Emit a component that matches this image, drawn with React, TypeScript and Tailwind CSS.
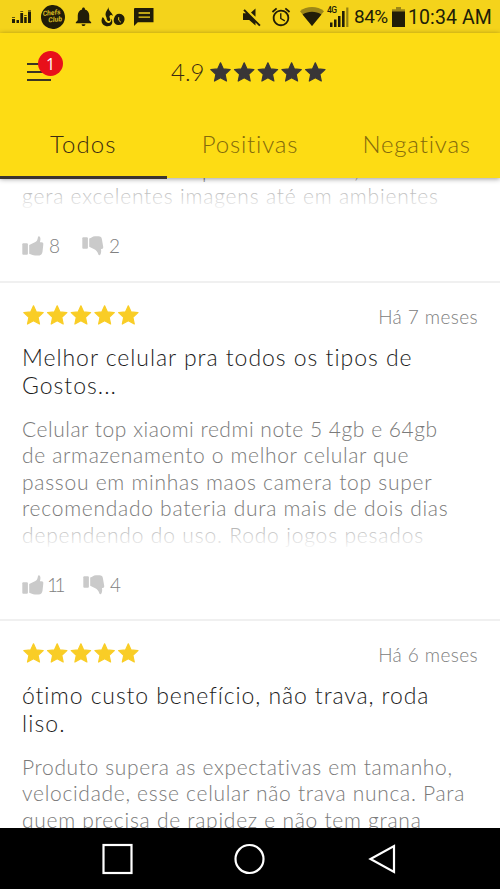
import type { ReactNode } from 'react';
import { clsx } from 'clsx';
import { MdAlarm, MdNotifications } from 'react-icons/md';

interface Line {
  text: string;
  tracking: string;
}

interface Review {
  date: string;
  title: Line[];
  body: Line[];
  likes?: number;
  dislikes?: number;
}

const reviews: Review[] = [
  {
    date: 'Há 7 meses',
    title: [
      { text: 'Melhor celular pra todos os tipos de', tracking: 'tracking-[0.97px]' },
      { text: 'Gostos...', tracking: 'tracking-[1px]' },
    ],
    body: [
      { text: 'Celular top xiaomi redmi note 5 4gb e 64gb', tracking: 'tracking-[0.53px]' },
      { text: 'de armazenamento o melhor celular que', tracking: 'tracking-[0.66px]' },
      { text: 'passou em minhas maos camera top super', tracking: 'tracking-[0.73px]' },
      { text: 'recomendado bateria dura mais de dois dias', tracking: 'tracking-[0.73px]' },
      { text: 'dependendo do uso. Rodo jogos pesados', tracking: 'tracking-[0.83px]' },
    ],
    likes: 11,
    dislikes: 4,
  },
  {
    date: 'Há 6 meses',
    title: [
      { text: 'ótimo custo benefício, não trava, roda', tracking: 'tracking-[0.9px]' },
      { text: 'liso.', tracking: 'tracking-[1.1px]' },
    ],
    body: [
      { text: 'Produto supera as expectativas em tamanho,', tracking: 'tracking-[0.64px]' },
      { text: 'velocidade, esse celular não trava nunca. Para', tracking: 'tracking-[0.7px]' },
      { text: 'quem precisa de rapidez e não tem grana', tracking: 'tracking-[0.73px]' },
    ],
  },
];

function Stars({ className }: { className: string }) {
  return (
    <svg viewBox="0 0 118 22" className={clsx('h-[22px] w-[118px] shrink-0', className)}>
      {[0, 1, 2, 3, 4].map((i) => (
        <path
          key={i}
          transform={`translate(${i * 23.7} 0)`}
          d="M11.5 1.8 L14.3 7.9 L21.2 8.6 L16.1 13.3 L17.5 20 L11.5 16.7 L5.5 20 L6.9 13.3 L1.8 8.6 L8.7 7.9 Z"
          fill="currentColor"
          stroke="currentColor"
          strokeWidth="1.2"
          strokeLinejoin="round"
        />
      ))}
    </svg>
  );
}

function Thumb({ down }: { down?: boolean }) {
  return (
    <svg viewBox="0 0 22 20" className="h-5 w-[22px] shrink-0 text-[#cacaca]" fill="currentColor">
      {down ? (
        <>
          <rect x="0.3" y="1.3" width="5.6" height="11.4" rx="1" />
          <path d="M7.2 2.4 C9.5 2.2 10.3 .3 13 .3 H16.5 C18.6 .3 19.6 1.2 19.9 3.2 L21.2 10.8 C21.4 12.3 20.7 13.1 19.3 13 H19 C19.3 14.8 19.3 16.8 18.4 18.6 C17.8 19.8 16.6 19.5 16.3 18.3 C15.6 15.6 14.1 14.2 12.3 13.2 L7.2 10.8 Z" />
        </>
      ) : (
        <>
          <rect x="0.3" y="7.3" width="5.6" height="11.4" rx="1" />
          <path d="M7.2 9 L12.9 6.2 C14.9 5.2 15.6 3.8 15.9 1.4 C16.1 .1 17.5 0 18.1 1.3 C18.8 2.9 18.3 4.6 17.9 6.2 H19.4 C20.9 6.2 21.5 7.1 21.3 8.5 L20.5 15.8 C20.2 18.1 18.9 19.5 16.6 19.5 H13 C10.4 19.5 9.2 18 7.2 17.7 Z" />
        </>
      )}
    </svg>
  );
}

function Votes({ likes, dislikes }: { likes: number; dislikes: number }) {
  return (
    <div className="flex h-5 items-center text-[19px] font-light text-[#808080]">
      <Thumb />
      <span className={clsx(likes > 9 ? 'ml-[3px] w-9 tracking-[-3.5px]' : 'ml-[5px] w-[33px]')}>{likes}</span>
      <Thumb down />
      <span className="ml-[5px]">{dislikes}</span>
    </div>
  );
}

function BodyLine({ tracking, children }: { tracking: string; children: ReactNode }) {
  return <span className={clsx('block h-[26.4px] whitespace-nowrap', tracking)}>{children}</span>;
}

function Fade() {
  return <div className="absolute inset-x-0 -bottom-0.5 h-[32px] bg-gradient-to-t from-white to-white/20" />;
}

function ReviewCard({ review }: { review: Review }) {
  return (
    <article className="h-[338px] shrink-0 border-b-2 border-[#f0f0f0] px-[22px] pt-[19px]">
      <div className="flex h-[26px] items-center justify-between">
        <Stars className="text-[#f9cd26]" />
        <span className="pt-1 text-[19px] font-light tracking-[0.4px] text-[#808080]">{review.date}</span>
      </div>
      <h2 className="mt-[15px] text-[23px] leading-[28px] text-[#1c1c1c]">
        {review.title.map((l) => (
          <span key={l.text} className={clsx('block whitespace-nowrap font-light', l.tracking)}>
            {l.text}
          </span>
        ))}
      </h2>
      <div className="relative mt-[17px] h-[132px] text-[21px] leading-[26.4px] font-light text-[#7a7a7a]">
        {review.body.map((l) => (
          <BodyLine key={l.text} tracking={l.tracking}>
            {l.text}
          </BodyLine>
        ))}
        {review.likes !== undefined && <Fade />}
      </div>
      {review.likes !== undefined && (
        <div className="mt-[27px]">
          <Votes likes={review.likes} dislikes={review.dislikes ?? 0} />
        </div>
      )}
    </article>
  );
}

function StatusBar() {
  return (
    <div className="flex h-[33px] shrink-0 items-center bg-[#f4d31b] text-[#211d08]">
      <svg viewBox="0 0 20 14" className="ml-3 h-[14px] w-5" fill="currentColor">
        <path d="M0 9h3v4H0zM4.5 10h2.5v3H4.5zM8.3 3h2.8v10H8.3zM12.2 7h2.5v6h-2.5zM16 1.5h3V13h-3z" />
        <path d="M0 7h3v1H0zM8.3 1h2.8v1H8.3zM12.2 5h2.5v1h-2.5zM16 0h3v.7h-3z" opacity=".7" />
      </svg>
      <div className="ml-[9px] flex size-6 -rotate-6 flex-col items-center justify-center rounded-full bg-[#211d08] text-[7px] leading-[7px] font-bold text-[#d8bc22] italic">
        <span className="-ml-0.5">Chefs</span>
        <span className="ml-1">Club</span>
      </div>
      <MdNotifications className="ml-[7px] h-[23px] w-[23px]" />
      <svg viewBox="0 0 24 20" className="ml-[6px] h-5 w-6" fill="currentColor">
        <path d="M7.5 0 C7 4 11.8 5.5 11.8 9 C11 8.2 10.2 7.9 9.4 8.3 C7.5 9.2 9.2 11 9.3 12.7 C9.3 14.6 6 14.6 5.8 12 C5.7 10 3.9 8.8 4.7 6 C5.2 4 6.8 2.8 7.5 0Z" />
        <path d="M1.8 10 C.1 11.8 0 15.5 2 17.5 C4.5 20 9.7 20 11 16.8 C11.8 14.7 11 12.5 10.2 11.7 C11 15 8 17 5.5 15.3 C3.4 13.8 3.6 11.3 1.8 10Z" />
        <path d="M18.2 6.8 C21.8 7 24 9.6 23.5 13 C23 16.4 20.3 18.4 17 18 C13.5 17.5 12 14.5 13 11.4 C13.8 8.8 15.6 6.8 18.2 6.8Z" />
        <path d="M17.7 10.2V13.2L19.9 15.3" fill="none" stroke="#f4d31b" strokeWidth="1" />
      </svg>
      <svg viewBox="0 0 20 18" className="ml-[9px] h-[18px] w-5" fill="currentColor">
        <path d="M1 0H19.5V14.3H3.8L0 18V1Q0 0 1 0Z" />
        <path d="M4.6 5H16M4.6 9.2H16" stroke="#f4d31b" strokeWidth="1.3" />
      </svg>
      <svg viewBox="0 0 20 20" className="ml-[88px] h-5 w-5" fill="currentColor">
        <path d="M1 6.3H4L1.3 3.5L2.8 2.2L18.6 18L17.2 19.3L13.5 15.6V18.5L7.2 13H1Z" />
        <path d="M9 5.5L13.5 1.4V9.8Z" />
      </svg>
      <MdAlarm className="ml-[8px] h-[22px] w-[22px]" />
      <svg viewBox="0 0 24 19" className="ml-[8px] h-[19px] w-6">
        <path d="M12 19L0 4.3C6.5-1.3 17.5-1.3 24 4.3Z" fill="#9c8618" />
        <path d="M12 19L2.6 7.6C8 3.8 16 3.8 21.4 7.6Z" fill="#211d08" />
      </svg>
      <div className="relative ml-[5px] h-5 w-5">
        <span className="absolute -top-px -left-0.5 text-[8.5px] leading-[8px] font-medium tracking-[-0.6px]">
          4G
        </span>
        <svg viewBox="0 0 20 20" className="h-5 w-5" fill="currentColor">
          <path d="M1 15.5h2.5V20H1zM5 12.5h2.5V20H5zM9 9h2.5v11H9zM13 4h2.6v16H13z" />
          <path d="M17.2.5h2.2V20h-2.2z" opacity=".45" />
        </svg>
      </div>
      <span className="ml-[5px] w-[34px] pt-0.5 text-[19px] tracking-[-0.5px] whitespace-nowrap">84%</span>
      <svg viewBox="0 0 13 20" className="ml-[4px] h-5 w-[13px]">
        <path d="M4 0H9V2.3H13V5H0V2.3H4Z" fill="#9c8618" />
        <path d="M0 4.5H13V20H0Z" fill="#211d08" />
      </svg>
      <span className="ml-[3px] pt-0.5 text-[19.5px] tracking-[0.1px] whitespace-nowrap">10:34 AM</span>
    </div>
  );
}

function Header() {
  return (
    <header className="z-10 flex h-[145px] shrink-0 flex-col bg-[#fddc14] text-[#3b2a12] shadow-[0_1px_5px_rgba(0,0,0,0.4)]">
      <div className="flex h-[78px] items-center">
        <div className="relative ml-[27px] flex h-[18px] w-6 flex-col justify-between">
          <span className="h-0.5 bg-[#3b3523]" />
          <span className="h-0.5 bg-[#3b3523]" />
          <span className="h-0.5 bg-[#3b3523]" />
          <span className="absolute -top-[12px] left-[11px] flex size-[25px] items-center justify-center rounded-full bg-[#e8101a] font-['Open_Sans',sans-serif] text-[16px] text-white">
            1
          </span>
        </div>
        <span className="ml-[120px] w-[38px] text-[24px] font-light">4.9</span>
        <Stars className="text-[#393637]" />
      </div>
      <nav className="grid h-[67px] grid-cols-3 text-center text-[24px] leading-[65px] font-light">
        <span className="border-b-3 border-[#3a3430] tracking-[1.1px]">Todos</span>
        <span className="tracking-[0.8px] text-[#836a0c]">Positivas</span>
        <span className="tracking-[0.8px] text-[#836a0c]">Negativas</span>
      </nav>
    </header>
  );
}

export default function App() {
  return (
    <div className="flex h-[889px] w-[500px] flex-col overflow-hidden bg-white font-['Roboto',sans-serif]">
      <StatusBar />
      <div className="flex min-h-0 flex-1 flex-col font-['Lato',sans-serif]">
        <Header />
        <main className="flex min-h-0 flex-1 flex-col overflow-hidden">
          <section className="h-[105px] shrink-0 border-b-2 border-[#f0f0f0] px-[22px]">
            <div className="relative -mt-[21px] h-[53px] text-[21px] leading-[26.4px] font-light text-[#7a7a7a]">
              <BodyLine tracking="tracking-[0.5px]">
                <span className="ml-[180px]">p</span>
                <span className="ml-[140px]">,</span>
              </BodyLine>
              <BodyLine tracking="tracking-[0.8px]">gera excelentes imagens até em ambientes</BodyLine>
              <Fade />
            </div>
            <div className="mt-[26px]">
              <Votes likes={8} dislikes={2} />
            </div>
          </section>
          {reviews.map((r) => (
            <ReviewCard key={r.date} review={r} />
          ))}
        </main>
      </div>
      <footer className="flex h-[61px] shrink-0 bg-black">
        <svg viewBox="0 0 500 61" className="h-[61px] w-[500px]" fill="none" stroke="white" strokeWidth="2.2">
          <rect x="103.5" y="17" width="28" height="28" />
          <circle cx="249.5" cy="31" r="14" />
          <path d="M394 18V44L370.5 31Z" />
        </svg>
      </footer>
    </div>
  );
}
